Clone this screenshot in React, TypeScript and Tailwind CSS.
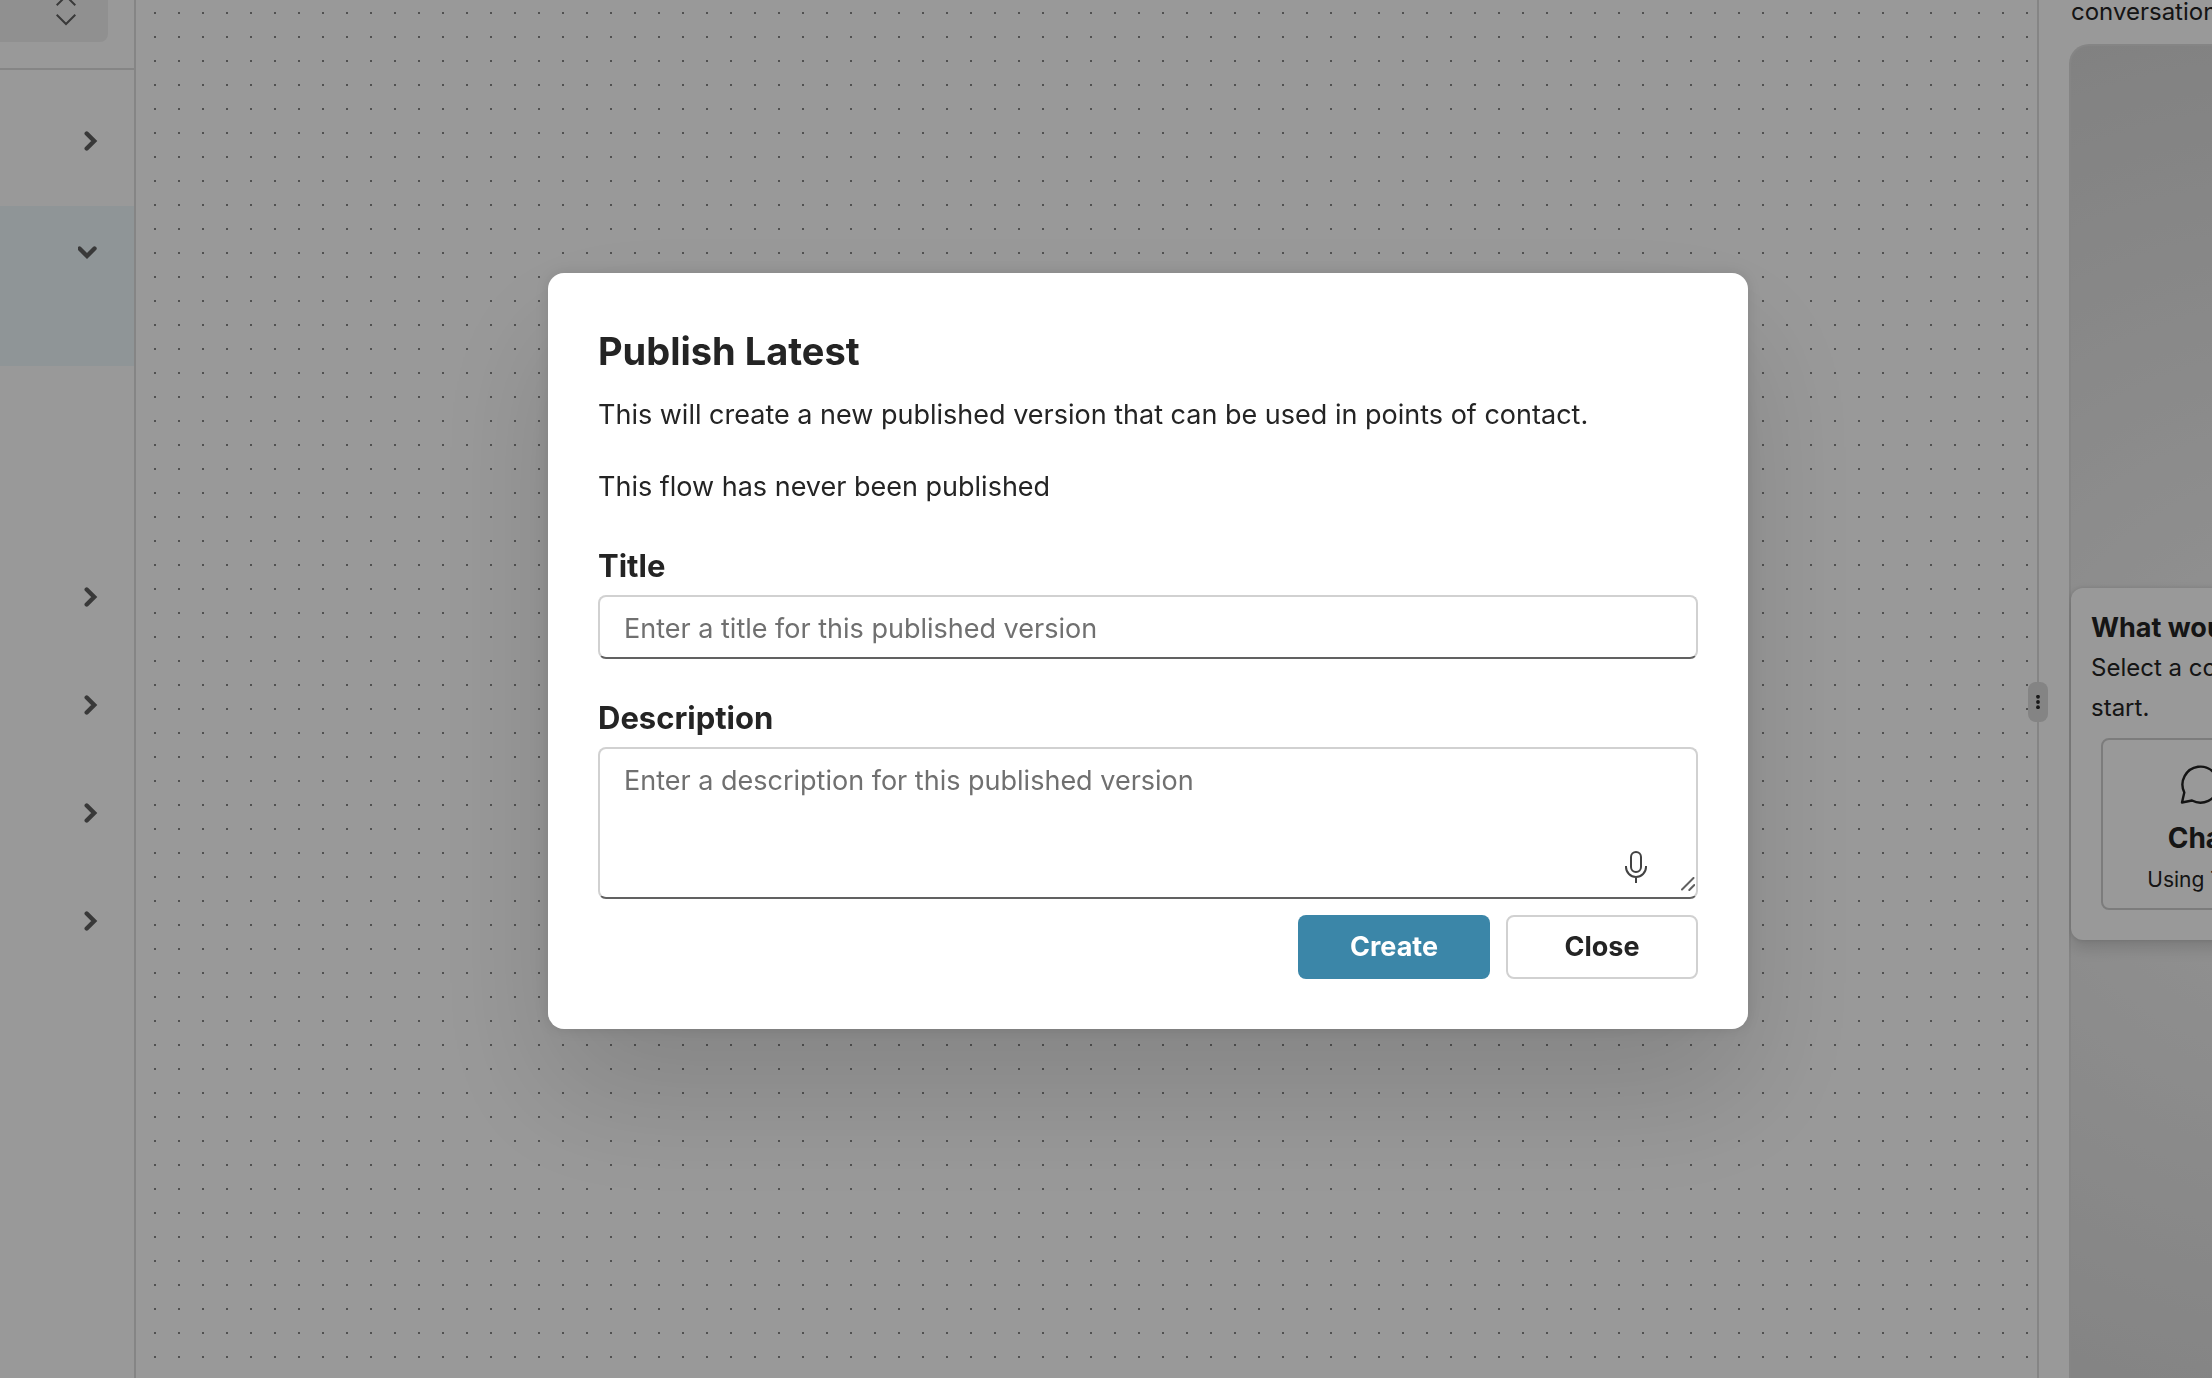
import { useState } from "react";

const sections = ["first", "second", "third", "fourth"];

function Chevron({ down = false }: { down?: boolean }) {
  return (
    <svg viewBox="0 0 20 20" className="w-5 h-5" fill="none" stroke="#606060" strokeWidth="4.400" strokeLinecap="round" strokeLinejoin="miter">
      {down ? <path d="M1.500 6.500 9 14l7.500-7.500" /> : <path d="M8.700 2.500 16.200 10l-7.500 7.500" />}
    </svg>
  );
}

function Sidebar() {
  return (
    <aside className="w-[136px] shrink-0 bg-white border-r-2 border-[#dedede]">
      <div className="h-[70px] border-b-2 border-[#dedede]">
        <button aria-label="Switch flow" className="flex justify-end w-[108px] h-[42px] pr-8 bg-[#f1f1f1] rounded-br-lg">
          <svg viewBox="0 0 20 32" className="w-5 h-8" fill="none" stroke="#606060" strokeWidth="2">
            <path d="M.7 5.300 10-4l9.300 9.300" />
            <path d="M.7 14.700 10 24l9.300-9.300" />
          </svg>
        </button>
      </div>
      <button aria-label="Expand section" className="flex items-center justify-end w-full h-[136px] pt-1.5 pr-9">
        <Chevron />
      </button>
      <button aria-label="Collapse section" className="flex items-start justify-end w-full h-40 pt-9 pr-9 bg-[#eef8fc]">
        <Chevron down />
      </button>
      <div className="pt-[177px]">
        {sections.map((section) => (
          <button key={section} aria-label={`Expand ${section} section`} className="flex items-center justify-end w-full h-[108px] pr-9">
            <Chevron />
          </button>
        ))}
      </div>
    </aside>
  );
}

function Canvas() {
  return (
    <main className="flex-1 bg-white">
      <svg className="block w-full h-full">
        <defs>
          <pattern id="dots" width="24" height="24" x="18" y="12" patternUnits="userSpaceOnUse">
            <rect width="2" height="2" fill="#888888" />
          </pattern>
        </defs>
        <rect width="100%" height="100%" fill="url(#dots)" />
      </svg>
    </main>
  );
}

function PreviewPanel() {
  return (
    <aside className="relative flex flex-col w-[175px] shrink-0 bg-white border-l-2 border-[#dedede] pl-[30px]">
      <button aria-label="Resize panel" className="absolute top-[682px] -left-[11px] flex items-center justify-center w-5 h-10 bg-[#dcdcdc] rounded-lg">
        <svg viewBox="0 0 4 14" className="w-1 h-3.5" fill="#2b2b2b">
          <circle cx="2" cy="1.800" r="1.900" />
          <circle cx="2" cy="7" r="1.900" />
          <circle cx="2" cy="12.200" r="1.900" />
        </svg>
      </button>
      <div className="flex flex-col flex-1 min-h-0 overflow-hidden">
        <p className="h-11 pl-0.5 text-2xl leading-[24px] whitespace-nowrap">conversation.</p>
        <div className="flex flex-col flex-1 w-[480px] pt-[542px] rounded-t-[20px] border-2 border-b-0 border-[#dedede] bg-[radial-gradient(circle_757px_at_240px_720px,#f7f7f7,#d8d8d8)]">
          <section className="h-[352px] pt-5 pl-5 bg-white rounded-xl shadow-[0_0_4px_rgba(0,0,0,0.12),0_8px_16px_rgba(0,0,0,0.14)]">
            <h2 className="text-[27px] leading-[40px] font-bold">What would you like?</h2>
            <p className="text-2xl leading-[40px]">
              Select a conversation to
              <br />
              start.
            </p>
            <button className="flex flex-col items-center w-[198px] h-[172px] mt-2.5 ml-2.5 pt-6 rounded-lg border-2 border-[#cfcfcf]">
              <svg viewBox="0 0 40 40" className="w-10 h-10" fill="none" stroke="#222222" strokeWidth="2.400" strokeLinejoin="round">
                <path d="M2 38.500l2.300-10A18 18 0 1 1 12 36.500z" />
              </svg>
              <span className="mt-3.5 text-[28px] leading-[40px] font-bold">Chat</span>
              <span className="mt-1.5 text-[21px] leading-[32px]">Using Text</span>
            </button>
          </section>
        </div>
      </div>
    </aside>
  );
}

function PublishDialog() {
  const [title, setTitle] = useState("");
  const [description, setDescription] = useState("");

  return (
    <div
      role="dialog"
      aria-modal="true"
      aria-labelledby="publish-heading"
      className="w-full max-w-[1200px] p-[50px] bg-white rounded-2xl shadow-[0_0_16px_rgba(0,0,0,0.12),0_64px_128px_rgba(0,0,0,0.14)]"
    >
      <h1 id="publish-heading" className="text-[38px] leading-[56px] font-bold">
        Publish Latest
      </h1>
      <p className="mt-4 text-[27px] leading-[40px]">
        This will create a new published version that can be used in points of contact.
      </p>
      <p className="mt-8 text-[27px] leading-[40px]">This flow has never been published</p>

      <form onSubmit={(e) => e.preventDefault()}>
        <label htmlFor="title" className="block pt-[38px] pb-2 text-[31px] leading-[42px] font-bold">
          Title
        </label>
        <input
          id="title"
          value={title}
          onChange={(e) => setTitle(e.target.value)}
          placeholder="Enter a title for this published version"
          className="block w-full h-16 px-6 pt-0.5 text-[27px] rounded-lg border-2 border-[#d1d1d1] border-b-[#616161] placeholder:text-[#707070]"
        />

        <label htmlFor="description" className="block pt-[38px] pb-2 text-[31px] leading-[42px] font-bold">
          Description
        </label>
        <div className="relative">
          <textarea
            id="description"
            value={description}
            onChange={(e) => setDescription(e.target.value)}
            placeholder="Enter a description for this published version"
            className="block w-full h-[152px] px-6 py-3 text-[27px] leading-[40px] resize-none rounded-lg border-2 border-[#d1d1d1] border-b-[#616161] placeholder:text-[#707070]"
          />
          <button type="button" aria-label="Dictate" className="absolute right-[50px] bottom-4">
            <svg viewBox="0 0 24 32" className="w-6 h-8" fill="none" stroke="#424242" strokeWidth="2">
              <rect x="7" y="1" width="10" height="20" rx="5" />
              <path d="M2 15v1a10 10 0 0 0 20 0v-1M12 26v6" />
            </svg>
          </button>
          <svg viewBox="0 0 14 14" className="absolute right-[3px] bottom-2 w-3.5 h-3.5 pointer-events-none" fill="none" stroke="#616161" strokeWidth="2" strokeLinecap="round">
            <path d="M1 12.500 12.500 1M8.300 13l5-5" />
          </svg>
        </div>

        <div className="flex justify-end gap-4 mt-4">
          <button type="submit" className="w-48 h-16 rounded-lg bg-[#3b86a8] text-white text-[27px] font-bold">
            Create
          </button>
          <button type="button" className="w-48 h-16 rounded-lg border-2 border-[#d1d1d1] text-[27px] font-bold">
            Close
          </button>
        </div>
      </form>
    </div>
  );
}

export default function App() {
  return (
    <div className="flex h-screen overflow-hidden font-['Inter',sans-serif] text-[#242424]">
      <Sidebar />
      <Canvas />
      <PreviewPanel />
      <div className="fixed inset-0 flex items-start justify-center pt-[273px] pl-21 bg-black/40">
        <PublishDialog />
      </div>
    </div>
  );
}
